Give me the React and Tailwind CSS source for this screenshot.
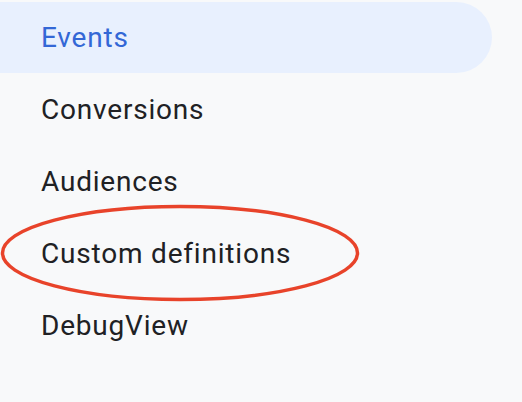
export default function App() {
  const items = ["Events", "Conversions", "Audiences", "Custom definitions", "DebugView"];
  return (
    <div className="relative w-[522px] h-[402px] bg-[#f8f9fa] overflow-hidden pt-[2px]" style={{ fontFamily: "Roboto, 'Open Sans', sans-serif" }}>
      <nav className="flex flex-col w-[492px]">
        {items.map((t, i) => (
          <div
            key={t}
            className={
              i === 0
                ? "h-[71px] mb-[1px] flex items-center pl-[41px] rounded-l-[3px] rounded-r-full bg-[#e8f0fe] text-[#3367d6] text-[28px] tracking-[0.8px]"
                : "h-[72px] flex items-center pl-[41px] text-[#202124] text-[28px] tracking-[0.8px]"
            }
          >
            {t}
          </div>
        ))}
      </nav>
      <svg className="absolute left-0 top-0" width="522" height="402" viewBox="0 0 522 402">
        <ellipse cx="180" cy="253" rx="177.5" ry="46.5" fill="none" stroke="#e8432a" strokeWidth="3.5" />
      </svg>
    </div>
  );
}
